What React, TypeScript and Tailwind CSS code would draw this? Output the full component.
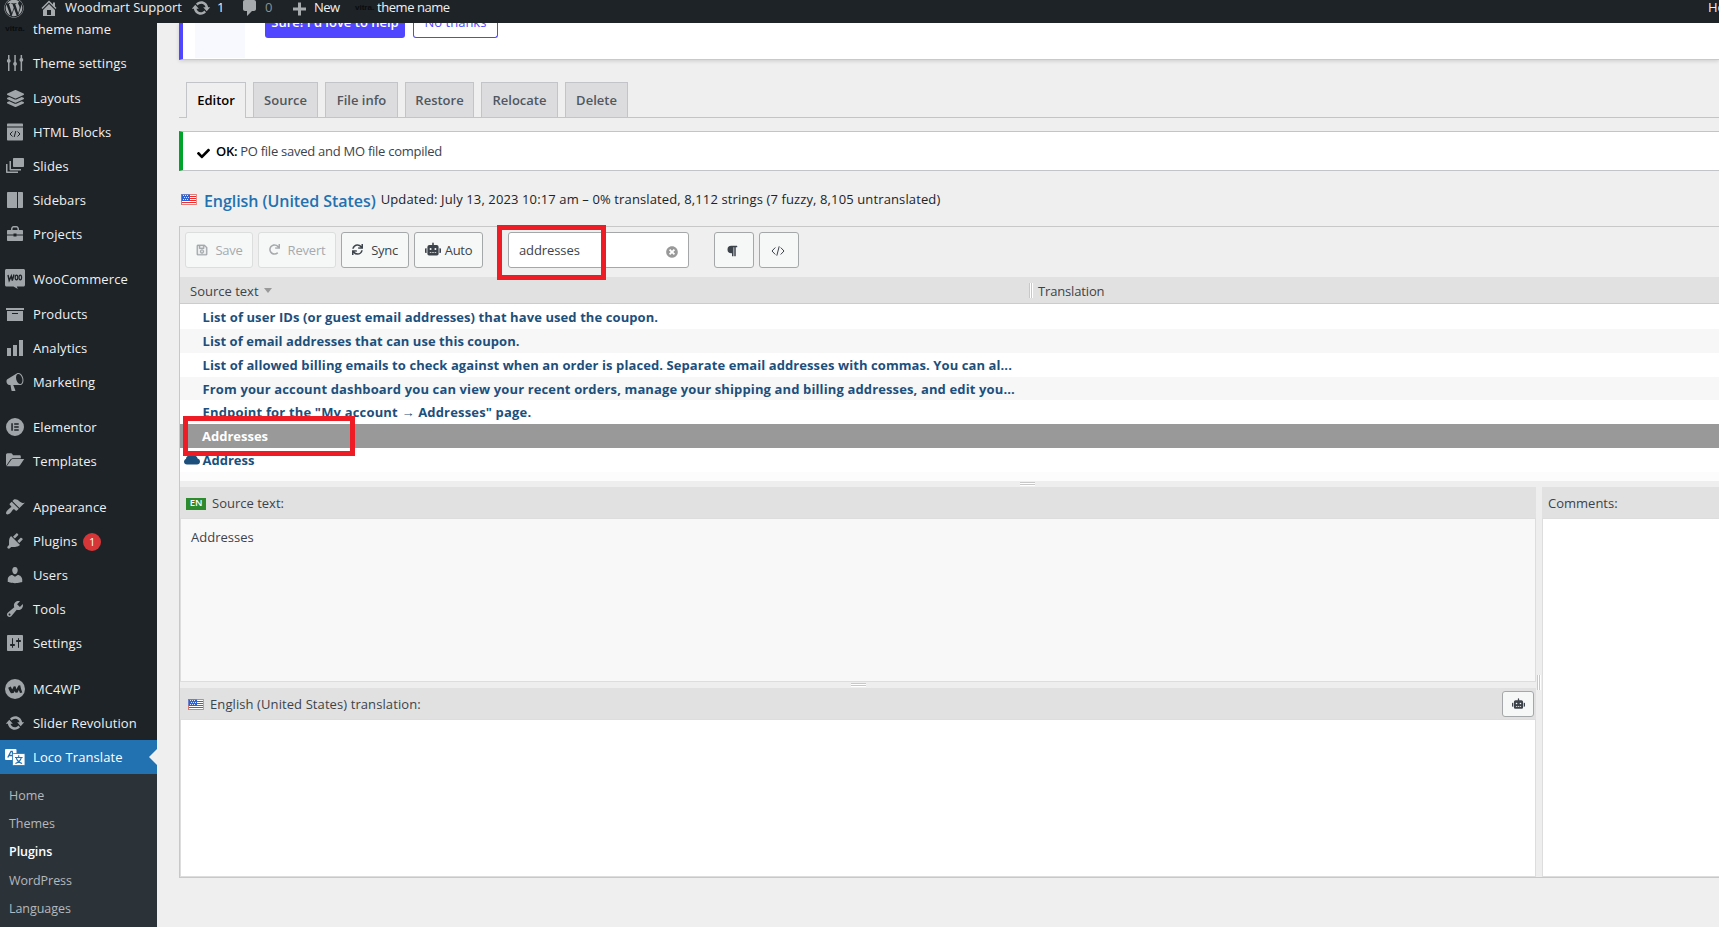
import type { ReactNode } from "react";
import { FaCheck, FaLayerGroup, FaParagraph, FaRedo, FaRegSave, FaRobot, FaSync, FaTimesCircle, FaWordpress } from "react-icons/fa";

function Dash({ d, className = "size-5" }: { d: string; className?: string }) {
  return (
    <svg viewBox="0 0 20 20" fill="currentColor" fillRule="evenodd" className={className}>
      <path d={d} />
    </svg>
  );
}

const P = {
  home: "M16 8.5l1.53 1.53-1.06 1.06L10 4.6l-6.47 6.49-1.06-1.06L10 2.5l4 4v-2h2v4zm-6-2.46l6 5.99V18H4v-5.97zM12 17v-5H8v5h4z",
  update:
    "M10.2 3.28c3.53 0 6.43 2.61 6.92 6h2.08l-3.5 4-3.5-4h2.32c-.45-1.97-2.21-3.45-4.32-3.45-1.45 0-2.73.71-3.54 1.78L4.95 5.66C6.23 4.2 8.11 3.28 10.2 3.28zm-.4 13.44c-3.52 0-6.43-2.61-6.92-6H.8l3.5-4c1.17 1.33 2.33 2.67 3.5 4H5.48c.45 1.97 2.21 3.45 4.32 3.45 1.45 0 2.73-.71 3.54-1.78l1.71 1.95c-1.28 1.46-3.15 2.38-5.25 2.38z",
  comment: "M5 2h9c1.1 0 2 .9 2 2v7c0 1.1-.9 2-2 2h-2l-5 5v-5H5c-1.1 0-2-.9-2-2V4c0-1.1.9-2 2-2z",
  plus: "M17 9.5v3h-5v5H9v-5H4v-3h5v-5h3v5h5z",
  appearance:
    "M14.48 11.06L7.41 3.99l1.5-1.5c.5-.56 2.3-.47 3.51.32 1.21.8 1.43 1.28 2.91 2.1 1.18.64 2.45 1.26 4.45.85zm-.71.71L6.7 4.7 4.93 6.47c-.39.39-.39 1.02 0 1.41l1.06 1.06c.39.39.39 1.03 0 1.42-.6.6-1.43 1.11-2.21 1.69-.35.26-.7.53-1.01.84C1.43 14.23.4 16.08 1.4 17.07c.99 1 2.84-.03 4.18-1.36.31-.31.58-.66.85-1.02.57-.78 1.08-1.61 1.69-2.21.39-.39 1.02-.39 1.41 0l1.06 1.06c.39.39 1.02.39 1.41 0z",
  plugins:
    "M13.11 4.36L9.87 7.6 8 5.73l3.24-3.24c.35-.34 1.05-.2 1.56.32.52.51.66 1.21.31 1.55zm-8 1.77l.91-1.12 9.01 9.01-1.19.84c-.71.71-2.63 1.16-3.82 1.16H6.14L4.9 17.26c-.59.59-1.54.59-2.12 0-.59-.58-.59-1.53 0-2.12l1.24-1.24v-3.88c0-1.13.4-3.19 1.09-3.89zm7.26 3.97l3.24-3.24c.34-.35 1.04-.21 1.55.31.52.51.66 1.21.31 1.55l-3.24 3.25z",
  users:
    "M10 9.25c-2.27 0-2.73-3.44-2.73-3.44C7 4.02 7.82 2 9.97 2c2.16 0 2.98 2.02 2.71 3.81 0 0-.41 3.44-2.68 3.44zm0 2.57L12.72 10c2.39 0 4.52 2.33 4.52 4.53v2.49s-3.65 1.13-7.24 1.13c-3.65 0-7.24-1.13-7.24-1.13v-2.49c0-2.25 1.94-4.48 4.47-4.48z",
  tools:
    "M16.68 9.77c-1.34 1.34-3.3 1.67-4.95.99l-5.41 6.52c-.99.99-2.59.99-3.58 0s-.99-2.59 0-3.57l6.52-5.42c-.68-1.65-.35-3.61.99-4.95 1.28-1.28 3.12-1.62 4.72-1.06l-2.89 2.89 2.82 2.82 2.86-2.87c.53 1.58.18 3.39-1.08 4.65zM3.81 16.21c.4.39 1.04.39 1.43 0 .4-.4.4-1.04 0-1.43-.39-.4-1.03-.4-1.43 0-.39.39-.39 1.03 0 1.43z",
  settings:
    "M18 17V3c0-.55-.45-1-1-1H3c-.55 0-1 .45-1 1v14c0 .55.45 1 1 1h14c.55 0 1-.45 1-1zM8 11h1c.55 0 1 .45 1 1s-.45 1-1 1H8v1.5c0 .28-.22.5-.5.5s-.5-.22-.5-.5V13H6c-.55 0-1-.45-1-1s.45-1 1-1h1V5.5c0-.28.22-.5.5-.5s.5.22.5.5V11zm5-2h-1c-.55 0-1-.45-1-1s.45-1 1-1h1V5.5c0-.28.22-.5.5-.5s.5.22.5.5V7h1c.55 0 1 .45 1 1s-.45 1-1 1h-1v5.5c0 .28-.22.5-.5.5s-.5-.22-.5-.5V9z",
  megaphone:
    "M18.15 5.94c.46 1.62.38 3.22-.02 4.48-.42 1.28-1.26 2.18-2.3 2.48-.16.06-.26.06-.4.06-.06.02-.12.02-.18.02-.06.02-.14.02-.22.02h-6.8l2.22 5.5c.02.14-.06.26-.14.34-.08.1-.24.16-.34.16H6.95c-.1 0-.26-.06-.34-.16-.08-.08-.16-.2-.14-.34l-1-5.5H4.25l-.02-.02c-.5.06-1.08-.18-1.54-.62s-.88-1.08-1.06-1.88c-.24-.8-.2-1.56-.02-2.2.18-.62.58-1.08 1.06-1.3l.02-.02 9-5.4c.1-.06.18-.1.24-.16.06-.04.14-.08.24-.12.16-.08.28-.12.5-.18 1.04-.3 2.24.1 3.22.98s1.84 2.24 2.26 3.86zm-2.58 5.98h-.02c.4-.1.74-.34 1.04-.7.58-.7.86-1.76.86-3.04 0-.64-.1-1.3-.28-1.98-.34-1.36-1.02-2.5-1.78-3.24s-1.68-1.1-2.46-.88c-.82.22-1.4.96-1.7 2-.32 1.04-.28 2.36.06 3.72.38 1.36 1 2.5 1.8 3.24.78.74 1.62 1.1 2.48.88z",
  archive: "M19 4v2H1V4h18zM2 7h16v10H2V7zm11 3V9H7v1h6z",
  chart: "M18 18V2h-4v16h4zm-6 0V7H8v11h4zm-6 0v-8H2v8h4z",
  sliders:
    "M3 2h1.500v4.100a2 2 0 0 1 0 3.600V18H3V9.700a2 2 0 0 1 0-3.600zM9.300 2h1.500v7.100a2 2 0 0 1 0 3.600V18H9.300v-5.300a2 2 0 0 1 0-3.600zM15.600 2h1.500v3.100a2 2 0 0 1 0 3.600V18h-1.500V8.700a2 2 0 0 1 0-3.600z",
  sidebars: "M3 2h9v16H3c-.6 0-1-.4-1-1V3c0-.6.4-1 1-1zm10 0H17c.6 0 1 .4 1 1v14c0 .6-.4 1-1 1h-4z",
  briefcase:
    "M6 6V5c0-1.500 1.200-3 2.500-3h3C12.800 2 14 3.500 14 5v1h3c.6 0 1 .4 1 1v3.500H11.500V9.500h-3v1H2V7c0-.6.400-1 1-1zm1.500 0h5V5c0-.8-.500-1.500-1.300-1.500H8.800c-.8 0-1.300.700-1.300 1.500zM2 11.500h6.500v1h3v-1H18V16c0 .6-.4 1-1 1H3c-.6 0-1-.4-1-1z",
  slides:
    "M9 2h9c.6 0 1 .4 1 1v7c0 .6-.4 1-1 1H9c-.6 0-1-.4-1-1V3c0-.6.4-1 1-1zM4.500 5H6v8h10v1.500H5.500c-.6 0-1-.4-1-1zM1 8h1.500v7.500H13V17H2c-.6 0-1-.4-1-1z",
  folder:
    "M1 15V4c0-1 .6-1.700 1.500-1.700H6c.6 0 1 .3 1.300.8L8 4.300h6.500c.8 0 1.300.500 1.300 1.200V7.200H8.500C7 7.200 6 7.700 5.200 8.700zM1.600 15.300l4.200-5.800c.600-.9 1.400-1.400 2.500-1.400h10.900l-4 5.800c-.600.9-1.400 1.400-2.400 1.400z",
  elementor: "M10 1a9 9 0 1 1 0 18 9 9 0 0 1 0-18zM6.300 6.200v7.600h1.500V6.200zM9.200 6.200v1.500h4.500V6.200zM9.200 9.250v1.500h4.500v-1.500zM9.200 12.300v1.500h4.500v-1.500z",
};

function HtmlIcon() {
  return (
    <svg viewBox="0 0 20 20" className="size-5">
      <path fill="currentColor" d="M3 1.500h14c.6 0 1 .4 1 1V4.600H2V2.500c0-.6.400-1 1-1zM2 5.600h16v11.900c0 .6-.4 1-1 1H3c-.6 0-1-.4-1-1z" />
      <path d="M7.500 9.500L5 12l2.500 2.500M12.500 9.500L15 12l-2.500 2.500M10.800 9l-1.600 6" fill="none" stroke="#1d2327" strokeWidth="1" />
    </svg>
  );
}

function WooIcon() {
  return (
    <svg viewBox="0 0 20 20" className="size-5">
      <path fill="currentColor" d="M1.500 0h17c.8 0 1.500.7 1.500 1.500V16c0 .8-.7 1.500-1.500 1.500h-6.700l1 2.500-4.300-2.500h-7C.7 17.500 0 16.800 0 16V1.500C0 .7.700 0 1.500 0z" />
      <path d="M3 6l1.200 5.500L6.300 7l1 4.500L9 5.500" fill="none" stroke="#1d2327" strokeWidth="1.400" />
      <ellipse cx="11.500" cy="8.500" rx="1.300" ry="2.300" fill="none" stroke="#1d2327" strokeWidth="1.200" />
      <ellipse cx="15.300" cy="8.500" rx="1.300" ry="2.300" fill="none" stroke="#1d2327" strokeWidth="1.200" />
    </svg>
  );
}

function McIcon() {
  return (
    <svg viewBox="0 0 20 20" className="size-5">
      <circle cx="10" cy="10" r="10" fill="currentColor" />
      <path
        d="M3.200 8.700l2.600-1.200 1.400 3 1.600-3.300 1.900.4.600 2.600 2.200-3.700 1.700-.2c.4 2.500 1.200 5 2.100 7.100l-2.300.7-1.200-3-1.400 2.700-2.200-.2-.4-1.600-1.300 2-2.500.2C4.800 12.800 4 10.800 3.200 8.700z"
        fill="#1d2327"
      />
    </svg>
  );
}

function LocoIcon() {
  return (
    <svg viewBox="0 0 20 20" className="size-5">
      <rect x="0" y="2" width="11.500" height="11" rx="1" fill="#fff" />
      <path d="M2.800 10.500L6 4.300h1.200l1 6.200M4 8.500h4" fill="none" stroke="#2271b1" strokeWidth="1.300" />
      <rect x="7.500" y="6.500" width="12.500" height="12" rx="1" fill="#fff" stroke="#2271b1" strokeWidth=".8" />
      <path d="M13.700 8.300v2M10 10.500h7.600M11.300 11c.8 2.500 3 4.500 5.800 5.500M16.200 11c-.8 2.500-3 4.500-5.800 5.500" fill="none" stroke="#2271b1" strokeWidth="1.100" />
    </svg>
  );
}

function Vitra({ className = "" }: { className?: string }) {
  return <span className={`font-['Liberation_Sans',sans-serif] text-[8px] font-bold leading-none text-[#0a0c0e] ${className}`}>vitra.</span>;
}

function Flag({ className = "" }: { className?: string }) {
  return (
    <svg viewBox="0 0 16 11" className={`h-[11px] w-4 shrink-0 ${className}`} shapeRendering="crispEdges">
      <rect width="16" height="11" fill="#fff" />
      {[0, 2, 4, 6, 8, 10].map((y) => (
        <rect key={y} y={y} width="16" height="1" fill={y === 0 || y === 10 ? "#dc7f7c" : "#ee2a2a"} />
      ))}
      <rect width="1" height="11" fill="#d9756f" />
      <rect x="15" width="1" height="11" fill="#e08f8b" />
      <rect width="9" height="7" fill="#2a62d6" />
      <rect width="9" height="1" fill="#6b80c9" />
      <rect width="1" height="7" fill="#6b80c9" />
      {[2, 4, 6].map((x) => (
        <g key={x} fill="#dfe9ff">
          <rect x={x} y="1" width="1" height="1" />
          <rect x={x + 1} y="3" width="1" height="1" />
          <rect x={x} y="5" width="1" height="1" />
        </g>
      ))}
    </svg>
  );
}

type Item = { label: string; icon: ReactNode; gap?: string; badge?: string };

const menu: Item[] = [
  { label: "theme name", icon: <Vitra /> },
  { label: "Theme settings", icon: <Dash d={P.sliders} /> },
  { label: "Layouts", icon: <FaLayerGroup className="size-[17px]" />, gap: "mt-px" },
  { label: "HTML Blocks", icon: <HtmlIcon /> },
  { label: "Slides", icon: <Dash d={P.slides} /> },
  { label: "Sidebars", icon: <Dash d={P.sidebars} /> },
  { label: "Projects", icon: <Dash d={P.briefcase} /> },
  { label: "WooCommerce", icon: <WooIcon />, gap: "mt-[11px]" },
  { label: "Products", icon: <Dash d={P.archive} />, gap: "mt-px" },
  { label: "Analytics", icon: <Dash d={P.chart} /> },
  { label: "Marketing", icon: <Dash d={P.megaphone} /> },
  { label: "Elementor", icon: <Dash d={P.elementor} />, gap: "mt-[11px]" },
  { label: "Templates", icon: <Dash d={P.folder} /> },
  { label: "Appearance", icon: <Dash d={P.appearance} />, gap: "mt-3" },
  { label: "Plugins", icon: <Dash d={P.plugins} />, badge: "1" },
  { label: "Users", icon: <Dash d={P.users} /> },
  { label: "Tools", icon: <Dash d={P.tools} /> },
  { label: "Settings", icon: <Dash d={P.settings} /> },
  { label: "MC4WP", icon: <McIcon />, gap: "mt-3" },
  { label: "Slider Revolution", icon: <Dash d={P.update} /> },
];

function Sidebar() {
  return (
    <aside className="flex w-[157px] shrink-0 flex-col bg-[#1d2327] text-[13px] text-[#f0f0f1]">
      <nav className="-mt-[11px] flex flex-col tracking-[0.09px]">
        {menu.map((m) => (
          <a key={m.label} className={`flex h-[34px] items-center whitespace-nowrap ${m.gap ?? ""}`}>
            <span className="ml-[5px] mr-2 flex w-5 justify-center text-[#a0a5aa]">{m.icon}</span>
            <span className="pt-0.5">{m.label}</span>
            {m.badge && (
              <span className="ml-1.5 mt-0.5 flex size-[18px] items-center justify-center rounded-full bg-[#d63638] text-[11px] text-white">{m.badge}</span>
            )}
          </a>
        ))}
        <a className="relative flex h-[34px] items-center bg-[#2271b1] text-white">
          <span className="ml-[5px] mr-2 flex w-5 justify-center">
            <LocoIcon />
          </span>
          <span className="pt-0.5">Loco Translate</span>
          <svg viewBox="0 0 8 16" className="absolute right-0 top-[9px] h-4 w-2">
            <path d="M8 0v16L0 8z" fill="#f0f0f1" />
          </svg>
        </a>
      </nav>
      <div className="flex grow flex-col bg-[#2c3338] pl-[9px] pt-2 text-[12.5px] tracking-[-0.05px] text-[#b4b9be]">
        {["Home", "Themes", "Plugins", "WordPress", "Languages"].map((s) => (
          <a key={s} className={`flex h-[28.3px] items-center ${s === "Plugins" ? "font-semibold text-white" : ""}`}>
            {s}
          </a>
        ))}
      </div>
    </aside>
  );
}

function AdminBar() {
  return (
    <header className="relative z-10 flex h-[23px] shrink-0 items-start overflow-hidden whitespace-nowrap bg-[#1d2327] text-[13px] leading-[15px] text-[#f0f0f1]">
      <div className="flex h-[15px] w-full items-center">
        <FaWordpress className="ml-1 size-5 shrink-0 text-[#a7aaad]" />
        <Dash d={P.home} className="ml-[15px] size-5 shrink-0 text-[#a7aaad]" />
        <span className="ml-1.5 w-[111px]">Woodmart Support</span>
        <Dash d={P.update} className="ml-[15px] size-5 shrink-0 text-[#a7aaad]" />
        <span className="ml-1.5 w-[9px]">1</span>
        <Dash d={P.comment} className="ml-3.5 size-5 shrink-0 text-[#a7aaad]" />
        <span className="ml-[5px] w-[9px] text-[#8c9196]">0</span>
        <Dash d={P.plus} className="ml-[15px] size-5 shrink-0 text-[#a7aaad]" />
        <span className="ml-[5px] w-[27px] tracking-[-0.5px]">New</span>
        <Vitra className="ml-[14px] w-[18px]" />
        <span className="ml-1 tracking-[-0.45px]">theme name</span>
        <span className="ml-auto w-[11px]">Howdy</span>
      </div>
    </header>
  );
}

const tabs = [
  { label: "Source", w: "w-[65px]" },
  { label: "File info", w: "w-[73px]" },
  { label: "Restore", w: "w-[69px]" },
  { label: "Relocate", w: "w-[77px]" },
  { label: "Delete", w: "w-[63px]" },
];

function Tabs() {
  return (
    <div className="mt-[22px] flex h-9 items-stretch text-[13px] font-semibold text-[#50575e]">
      <span className="w-[7px] border-b border-[#c3c4c7]" />
      <span className="flex w-[60px] items-center justify-center border border-b-0 border-[#c3c4c7] pt-px text-black">Editor</span>
      {tabs.map((t) => (
        <div key={t.label} className="flex">
          <span className="w-[7px] border-b border-[#c3c4c7]" />
          <span className={`flex items-center justify-center whitespace-nowrap border border-[#c3c4c7] bg-[#dcdcde] pt-0.5 ${t.w}`}>{t.label}</span>
        </div>
      ))}
      <span className="grow border-b border-[#c3c4c7]" />
    </div>
  );
}

function Btn({ children, className = "" }: { children: ReactNode; className?: string }) {
  return (
    <button className={`flex h-9 shrink-0 items-center justify-center rounded-[3px] border bg-[#f6f8f8] ${className}`}>
      {children}
    </button>
  );
}

const on = "border-[#a5a8a8] text-[#3c434a]";
const off = "border-[#dcdddd] text-[#a7aaad]";

function Toolbar() {
  return (
    <div className="flex h-[50px] items-start pl-[5px] pt-[5px] text-[13px]">
      <Btn className={`w-[68px] gap-2 ${off}`}>
        <FaRegSave className="size-3" strokeWidth={14} stroke="currentColor" />
        <span className="pt-0.5 tracking-[-0.3px]">Save</span>
      </Btn>
      <Btn className={`ml-[5px] w-[78px] gap-2 ${off}`}>
        <FaRedo className="mb-0.5 size-[11px]" />
        <span className="pt-0.5 tracking-[-0.2px]">Revert</span>
      </Btn>
      <Btn className={`ml-[5px] w-[68px] gap-2 ${on}`}>
        <FaSync className="mb-0.5 size-[11px]" />
        <span className="pt-0.5 tracking-[-0.3px]">Sync</span>
      </Btn>
      <Btn className={`ml-[5px] w-[69px] gap-1 ${on}`}>
        <FaRobot className="mb-0.5 size-4" />
        <span className="pt-0.5 tracking-[-0.3px]">Auto</span>
      </Btn>
      <div className="relative ml-[25px] flex h-9 w-[181px] items-center justify-between rounded-[3px] border border-[#a5a8a8] bg-white pl-2.5 pr-[10px] text-[#3c434a]">
        <span className="pt-0.5 tracking-[-0.1px]">addresses</span>
        <FaTimesCircle className="mt-1 size-3 text-[#999]" />
        <div className="pointer-events-none absolute -left-3 -top-2 h-[55px] w-[109px] border-[5px] border-[#ee1c24]" />
      </div>
      <Btn className={`ml-[25px] w-10 pr-1 ${on}`}>
        <FaParagraph className="mt-0.5 size-[12px]" />
      </Btn>
      <Btn className={`ml-[5px] w-10 pr-0.5 ${on}`}>
        <svg viewBox="0 0 14 10" className="mt-0.5 h-2.5 w-3.5" fill="none" stroke="currentColor" strokeWidth="1">
          <path d="M4.300 1.500L1 5l3.300 3.500M9.700 1.500L13 5 9.700 8.500M8.200.3L5.800 9.700" />
        </svg>
      </Btn>
    </div>
  );
}

const rows = [
  { t: "List of user IDs (or guest email addresses) that have used the coupon.", c: "h-[25px] bg-white tracking-[0.09px]" },
  { t: "List of email addresses that can use this coupon.", c: "h-6 bg-[#f7f7f7] tracking-[0.05px]" },
  {
    t: "List of allowed billing emails to check against when an order is placed. Separate email addresses with commas. You can al...",
    c: "h-6 bg-white tracking-[0.085px]",
  },
  {
    t: "From your account dashboard you can view your recent orders, manage your shipping and billing addresses, and edit you...",
    c: "h-[23px] bg-[#f7f7f7] tracking-[0.13px]",
  },
  { t: 'Endpoint for the "My account → Addresses" page.', c: "h-6 bg-white tracking-[0.17px]" },
];

function HGrip() {
  return (
    <div className="flex h-1 w-[15px] flex-col">
      <div className="h-px bg-[#c8c8c8]" />
      <div className="h-px bg-white" />
      <div className="h-px bg-[#c8c8c8]" />
      <div className="h-px bg-white" />
    </div>
  );
}

function VGrip() {
  return (
    <span className="flex h-[15px] w-1">
      <span className="w-px bg-[#c8c8c8]" />
      <span className="w-px bg-white" />
      <span className="w-px bg-[#c8c8c8]" />
      <span className="w-px bg-white" />
    </span>
  );
}

function Editor() {
  return (
    <section className="mt-[18px] flex flex-col border-b border-l border-t border-[#c8c8c8]">
      <Toolbar />
      <div className="flex h-[27px] items-center border-b border-[#ccc] bg-[#e1e1e1] text-[13px] text-[#3c434a]">
        <span className="ml-2.5 pt-[3px]">Source text</span>
        <span className="ml-[5px] border-x-[4.500px] border-t-[5px] border-x-transparent border-t-[#999]" />
        <span className="ml-auto flex w-[690px] items-center">
          <span className="mr-[5px]">
            <VGrip />
          </span>
          <span className="pt-[3px] tracking-[-0.15px]">Translation</span>
        </span>
      </div>
      <div className="flex flex-col whitespace-nowrap text-[13px] font-bold text-[#1d4f7c]">
        {rows.map((r) => (
          <div key={r.t} className={`flex items-center pl-[22.500px] pt-0.5 ${r.c}`}>
            {r.t}
          </div>
        ))}
        <div className="relative flex h-6 items-center bg-[#999] pl-[22px] pt-0.5 text-white">
          Addresses
          <div className="pointer-events-none absolute -top-2 left-[3px] z-10 h-10 w-[172px] border-[5px] border-[#ee1c24]" />
        </div>
        <div className="flex h-6 items-center bg-white">
          <svg viewBox="0 0 16 10" className="ml-1 mr-[2.500px] h-2.5 w-4" fill="currentColor">
            <path d="M3 9.500C1.200 9.500 0 8.200 0 6.700s1-2.400 2-2.700C2 1.800 3.500.5 5.500.5h4.200c1.900 0 3.500 1.200 3.900 3 1.400.3 2.400 1.500 2.400 3 0 1.700-1.300 3-3 3z" />
          </svg>
          <span className="pt-0.5">Address</span>
        </div>
        <div className="h-[9px] bg-[#fcfcfc]" />
      </div>
      <div className="flex h-1.5 items-center bg-[#eee] pl-[840px]">
        <HGrip />
      </div>
      <div className="flex h-[390px] text-[13px] text-[#3c434a]">
        <div className="flex w-[1356px] flex-col">
          <div className="flex h-8 items-center border-b border-[#ddd] bg-[#e1e1e1] pl-1.5">
            <span className="mr-1.5 mt-0.5 flex h-3 w-5 items-center justify-center bg-[#2d8a2d] text-[9.500px] font-semibold text-white">EN</span>
            <span className="pt-0.5">Source text:</span>
          </div>
          <div className="h-[163px] border-x border-b border-[#ddd] bg-[#f8f8f8] pl-2.5 pt-[9px] leading-[19px]">Addresses</div>
          <div className="flex h-1.5 items-center bg-[#eee] pl-[671px]">
            <HGrip />
          </div>
          <div className="flex h-8 items-center border-b border-[#ddd] bg-[#e1e1e1] pl-2">
            <Flag className="mt-0.5" />
            <span className="ml-1.5 pt-0.5 tracking-[0.09px]">English (United States) translation:</span>
            <button className="ml-auto mr-0.5 flex h-[26px] w-8 items-center justify-center rounded-[3px] border border-[#a5a8a8] bg-[#f6f8f8]">
              <FaRobot className="size-[13px]" />
            </button>
          </div>
          <div className="grow border-x border-b border-[#ddd] bg-white" />
        </div>
        <div className="flex w-1.5 justify-center bg-[#eee] pt-[188px]">
          <VGrip />
        </div>
        <div className="flex grow flex-col">
          <div className="flex h-8 items-center border-b border-[#ddd] bg-[#e1e1e1] pl-1.5 pt-0.5">Comments:</div>
          <div className="grow border-b border-l border-[#ddd] bg-white" />
        </div>
      </div>
    </section>
  );
}

export default function App() {
  return (
    <div className="flex h-[927px] w-[1719px] flex-col overflow-hidden bg-[#efefef] font-['Open_Sans',sans-serif]">
      <AdminBar />
      <div className="flex min-h-0 grow">
        <Sidebar />
        <main className="ml-[22px] flex min-w-0 grow flex-col">
          <div className="flex h-[37px] shrink-0 border-b border-l-4 border-b-[#c8c9cc] border-l-[#5046ff] bg-white text-[13px] leading-none shadow-[0_1px_4px_rgba(0,0,0,0.150)]">
            <div className="ml-3 h-[35px] w-[50px] bg-[#f8f9ff]" />
            <div className="ml-5 h-[15px] rounded-b-[3px] bg-[#5046ff]">
              <div className="-mt-[7px] w-[140px] text-center font-semibold text-white">Sure! I'd love to help</div>
            </div>
            <div className="ml-2 h-[15px] rounded-b-[3px] border border-t-0 border-[#5046ff]">
              <div className="-mt-[7px] w-[83px] text-center text-[#5046ff]">No thanks</div>
            </div>
          </div>
          <Tabs />
          <div className="mt-[13px] flex h-10 shrink-0 items-center border-y border-l-4 border-y-[#c3c4c7] border-l-[#00a32a] bg-white pl-3.5 text-[13px] text-[#3c434a]">
            <FaCheck className="mr-1.5 mt-1 size-[13px] text-black" />
            <span className="mr-[3px] pt-0.5 font-semibold tracking-[-0.3px] text-black">OK:</span>
            <span className="pt-0.5 tracking-[-0.26px]">PO file saved and MO file compiled</span>
          </div>
          <div className="mt-[18px] flex h-[19px] items-center pl-0.5 text-[13px] text-[#1d2327]">
            <Flag className="mt-0.5" />
            <span className="ml-[7px] mr-[5px] pt-1 text-[16px] font-semibold tracking-[-0.06px] text-[#2271b1]">English (United States)</span>
            <span className="pt-[3px] tracking-[0.12px]">Updated: July 13, 2023 10:17 am – 0% translated, 8,112 strings (7 fuzzy, 8,105 untranslated)</span>
          </div>
          <Editor />
        </main>
      </div>
    </div>
  );
}
